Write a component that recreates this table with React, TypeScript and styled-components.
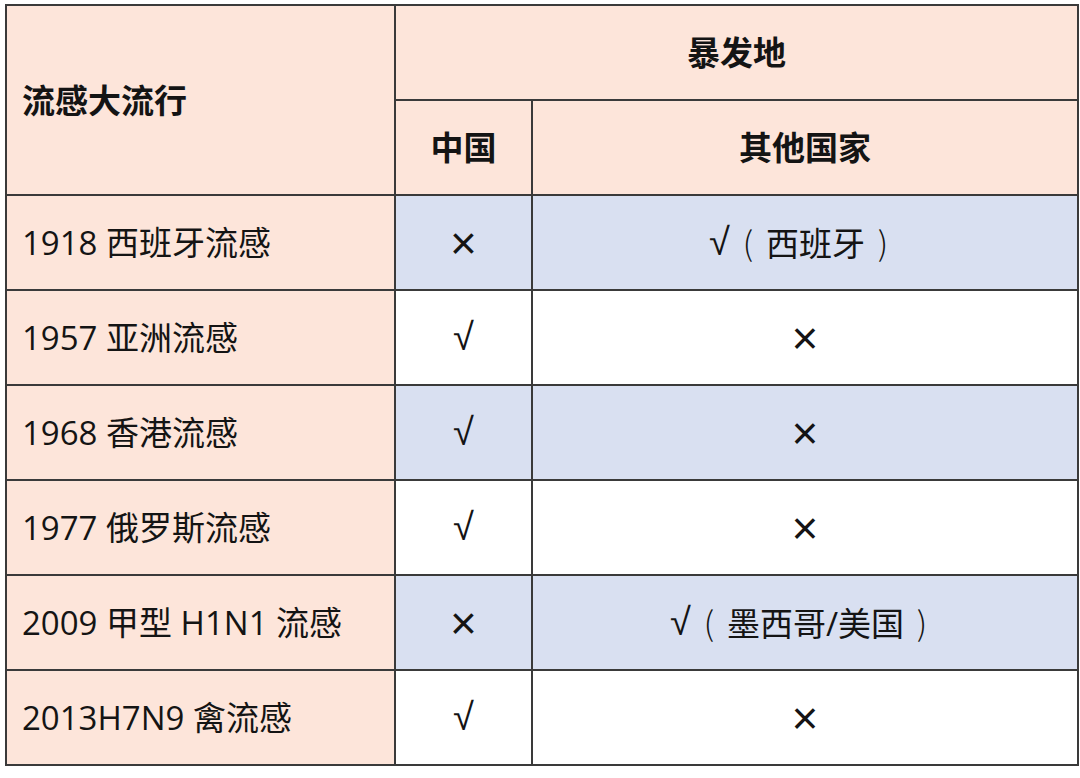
import React from "react";
import styled, { createGlobalStyle } from "styled-components";

const Global = createGlobalStyle`
  html, body { margin: 0; padding: 0; background: #ffffff; }
  body { font-family: "Open Sans", "Noto Sans CJK SC", sans-serif; }
`;

const Page = styled.div`
  padding: 4px 0 0 5px;
`;

const Table = styled.table`
  border-collapse: collapse;
  width: 1072px;
  table-layout: fixed;
  border: 2px solid #3a3a3a;
  color: #141414;
`;

const Cell = styled.td<{ $bg: "peach" | "blue" | "white"; $align?: "left" | "center"; $bold?: boolean }>`
  border: 2px solid #3a3a3a;
  background: ${(p) => (p.$bg === "peach" ? "#fde5da" : p.$bg === "blue" ? "#d9e0f1" : "#ffffff")};
  text-align: ${(p) => p.$align ?? "center"};
  font-weight: ${(p) => (p.$bold ? 700 : 400)};
  font-size: 33px;
  line-height: 1;
  padding: 0 0 0 ${(p) => (p.$align === "left" ? "15px" : "0")};
  white-space: nowrap;
  vertical-align: middle;
`;

const Mark = styled.span<{ $cross: boolean }>`
  display: inline-block;
  font-family: "Liberation Sans", sans-serif;
  font-size: ${(p) => (p.$cross ? "46px" : "38px")};
  line-height: 33px;
  vertical-align: ${(p) => (p.$cross ? "-4px" : "1px")};
`;

const Paren = styled.span`
  display: inline-block;
  width: 36px;
  text-align: center;
  font-family: "Noto Sans CJK SC", sans-serif;
  font-weight: 300;
`;

const Row = styled.tr<{ $h: number }>`
  height: ${(p) => p.$h}px;
`;

type Item = { name: string; cn: string; other: string; place?: string; tint: boolean };

const data: Item[] = [
  { name: "1918 西班牙流感", cn: "×", other: "√", place: "西班牙", tint: true },
  { name: "1957 亚洲流感", cn: "√", other: "×", tint: false },
  { name: "1968 香港流感", cn: "√", other: "×", tint: true },
  { name: "1977 俄罗斯流感", cn: "√", other: "×", tint: false },
  { name: "2009 甲型 H1N1 流感", cn: "×", other: "√", place: "墨西哥/美国", tint: true },
  { name: "2013H7N9 禽流感", cn: "√", other: "×", tint: false },
];

export default function App() {
  return (
    <Page>
      <Global />
      <Table>
        <colgroup>
          <col style={{ width: 389 }} />
          <col style={{ width: 137 }} />
          <col style={{ width: 546 }} />
        </colgroup>
        <tbody>
          <Row $h={95}>
            <Cell $bg="peach" $align="left" $bold rowSpan={2}>
              流感大流行
            </Cell>
            <Cell $bg="peach" $bold colSpan={2}>
              暴发地
            </Cell>
          </Row>
          <Row $h={95}>
            <Cell $bg="peach" $bold>中国</Cell>
            <Cell $bg="peach" $bold>其他国家</Cell>
          </Row>
          {data.map((d) => (
            <Row $h={95} key={d.name}>
              <Cell $bg="peach" $align="left">{d.name}</Cell>
              <Cell $bg={d.tint ? "blue" : "white"}>
                <Mark $cross={d.cn === "×"}>{d.cn}</Mark>
              </Cell>
              <Cell $bg={d.tint ? "blue" : "white"}>
                <Mark $cross={d.other === "×"}>{d.other}</Mark>
                {d.place && (
                  <>
                    <Paren>(</Paren>
                    {d.place}
                    <Paren>)</Paren>
                  </>
                )}
              </Cell>
            </Row>
          ))}
        </tbody>
      </Table>
    </Page>
  );
}
